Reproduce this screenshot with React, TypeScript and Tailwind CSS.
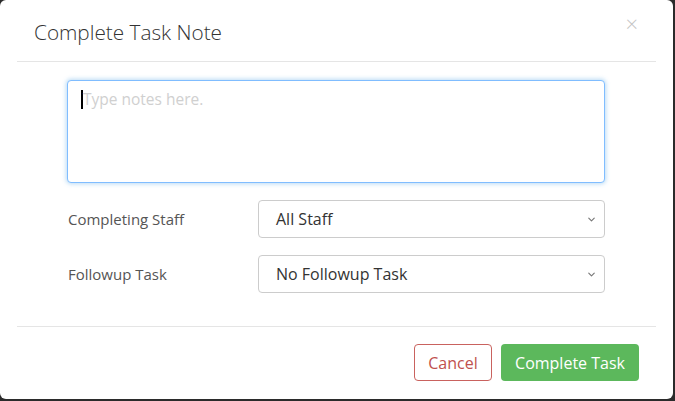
import { ChevronDown } from "lucide-react";

function SelectBox({ value }: { value: string }) {
  return (
    <div className="flex h-[38px] w-[347px] items-center justify-between rounded-[4px] border border-[#ccc] bg-white pl-[17px] pr-[7px] text-[16px] text-[#333]">
      <span>{value}</span>
      <ChevronDown className="size-[11px] text-[#777]" strokeWidth={2.5} />
    </div>
  );
}

export default function App() {
  return (
    <div
      className="h-[401px] w-[675px] overflow-hidden bg-[#2b2b2b]"
      style={{ fontFamily: '"Open Sans", "Noto Sans", sans-serif' }}
    >
      <div className="flex h-[399px] w-[673px] flex-col rounded-[6px] bg-white">
        <div className="mx-[17px] flex h-[62px] items-start justify-between border-b border-[#e5e5e5]">
          <h4 className="pl-[17px] pt-[17px] text-[20.75px] font-light text-[#333]">
            Complete Task Note
          </h4>
          <span className="pr-[18px] pt-[12px] text-[22px] leading-none font-light text-[#c4c4c4]">
            ×
          </span>
        </div>

        <div className="flex flex-col pl-[67px] pt-[18px]">
          <div className="relative h-[103px] w-[538px] rounded-[4px] border border-[#80bdff] bg-white shadow-[0_0_4px_1px_rgba(102,175,233,0.45)]">
            <span className="absolute left-[13px] top-[9px] h-[19px] w-[2px] bg-black" />
            <span className="absolute left-[15px] top-[7px] text-[15.5px] text-[#d0d0d0]">
              Type notes here.
            </span>
          </div>

          <div className="mt-[17px] flex items-center">
            <span className="w-[191px] pl-[1px] text-[15px] text-[#555]">Completing Staff</span>
            <SelectBox value="All Staff" />
          </div>
          <div className="mt-[17px] flex items-center">
            <span className="w-[191px] pl-[1px] text-[15px] text-[#555]">Followup Task</span>
            <SelectBox value="No Followup Task" />
          </div>
        </div>

        <div className="mx-[17px] mt-[33px] flex justify-end gap-[9px] border-t border-[#e5e5e5] pr-[17px] pt-[17px]">
          <button className="h-[37px] w-[78px] rounded-[4px] border border-[#c9625e] bg-white text-[16px] text-[#c0504d]">
            Cancel
          </button>
          <button className="h-[37px] w-[138px] rounded-[4px] bg-[#5cb85c] pt-[1px] text-[16px] text-white">
            Complete Task
          </button>
        </div>
      </div>
    </div>
  );
}
